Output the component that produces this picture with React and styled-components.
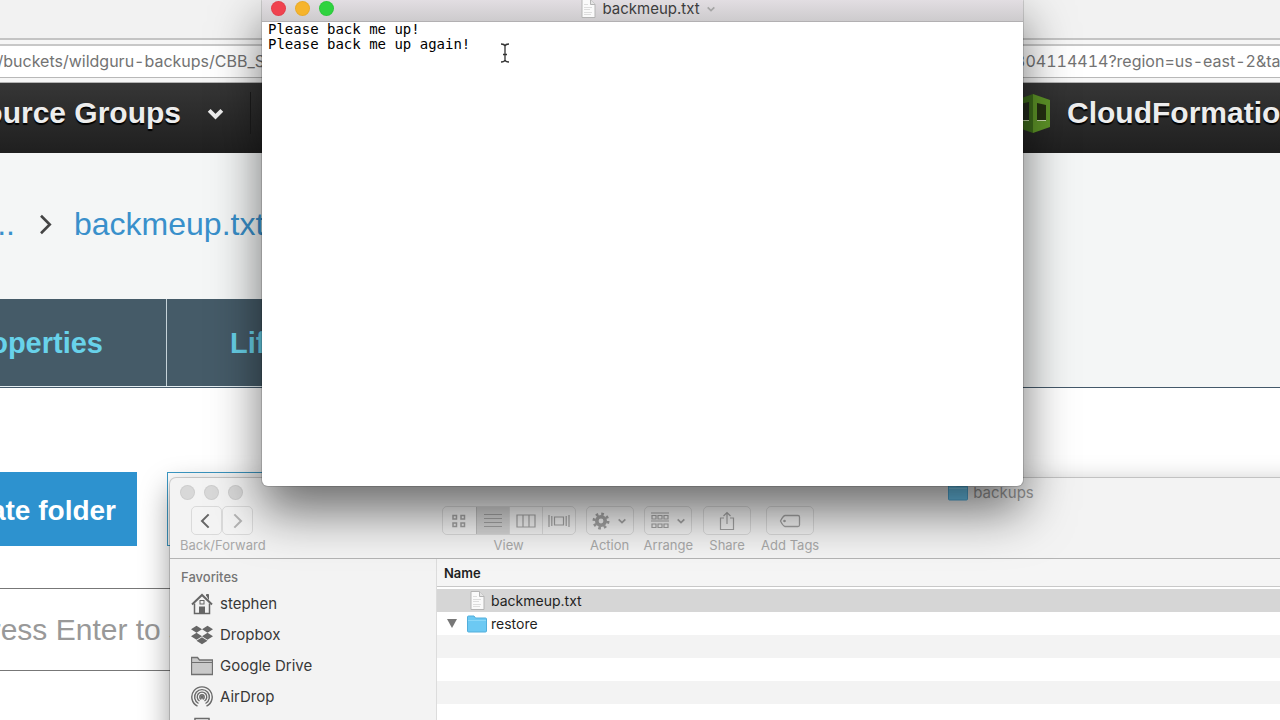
import React from 'react';
import styled, { createGlobalStyle, css } from 'styled-components';
import { FaDropbox } from 'react-icons/fa';

const GlobalStyle = createGlobalStyle`
  * {
    box-sizing: border-box;
  }
  body {
    margin: 0;
    background: #fff;
    font-family: Inter, "Liberation Sans", sans-serif;
  }
  button, input, textarea {
    font: inherit;
    margin: 0;
    padding: 0;
    border: 0;
    outline: 0;
    background: none;
  }
  a {
    text-decoration: none;
  }
`;

const Desktop = styled.div`
  position: relative;
  height: 100vh;
  overflow: hidden;
`;

/* ---------- browser ---------- */

const Browser = styled.div`
  font-family: "Liberation Sans", Arial, sans-serif;
`;

const TabStrip = styled.div`
  height: 40px;
  background: #f2f2f2;
  border-bottom: 2px solid #c4c4c4;
`;

const AddressRow = styled.div`
  padding: 4px 0;
  background: #f6f6f6;
  border-bottom: 1px solid #b4b4b4;
`;

const AddressField = styled.div`
  display: flex;
  align-items: center;
  height: 34px;
  padding-bottom: 2px;
  background: #fff;
  border-top: 2px solid #c8c8c8;
  border-bottom: 1px solid #b8b8b8;
  color: #737373;
  font-family: Inter, sans-serif;
  font-size: 16px;
  font-variant-numeric: tabular-nums;
  white-space: nowrap;
  overflow: hidden;
`;

const UrlPart = styled.span`
  display: flex;
  flex: none;
  justify-content: ${(props) => (props.$end ? 'flex-end' : 'flex-start')};
  ${(props) =>
    props.$end &&
    css`
      width: 265px;
      margin-right: 750px;
    `}
`;

const AwsNav = styled.nav`
  display: flex;
  align-items: center;
  height: 70px;
  padding-bottom: 10px;
  background: linear-gradient(#363636, #1f1f1f);
  overflow: hidden;
`;

const NavItem = styled.a`
  display: flex;
  flex: none;
  align-items: center;
  justify-content: flex-end;
  gap: 16px;
  color: #ededed;
  font-size: 30px;
  font-weight: bold;
  white-space: nowrap;
  text-shadow: 0 2px 1px #000;
`;

const NavLeft = styled.div`
  display: flex;
  flex: none;
  align-items: center;
  justify-content: flex-end;
  width: 251px;
  height: 42px;
  margin-right: 760px;
  padding-right: 25px;
  border-right: 1px solid #1c1c1c;
`;

const NavLeftItem = styled(NavItem)`
  gap: 25px;
`;

const Header = styled.header`
  height: 235px;
  background: #f4f6f6;
  border-bottom: 1px solid #44596a;
`;

const Crumbs = styled.div`
  display: flex;
  align-items: center;
  gap: 19px;
  height: 146px;
  padding-bottom: 4px;
`;

const Crumb = styled.a`
  display: flex;
  flex: none;
  justify-content: flex-end;
  color: #3990cb;
  font-size: 32px;
  ${(props) =>
    props.$cut &&
    css`
      width: 15px;
    `}
`;

const Tabs = styled.div`
  display: flex;
  width: 480px;
  height: 88px;
  border-bottom: 1px solid #e4eef2;
  background: #455b68;
`;

const Tab = styled.button`
  display: flex;
  flex: none;
  align-items: center;
  justify-content: ${(props) => (props.$first ? 'flex-end' : 'flex-start')};
  width: ${(props) => (props.$first ? '167px' : '313px')};
  padding: 2px 63px 0;
  color: #68d2ea;
  font-size: 29px;
  font-weight: bold;
  border-right: 1px solid #c5d3d9;
`;

const Actions = styled.div`
  display: flex;
  gap: 30px;
  padding: 84px 0 42px;
`;

const Action = styled.button`
  display: flex;
  align-items: center;
  justify-content: flex-end;
  width: ${(props) => (props.$outline ? '280px' : '137px')};
  height: 74px;
  padding: 3px 21px 0 0;
  color: #fff;
  background: ${(props) => (props.$outline ? '#fff' : '#2d92cf')};
  border: ${(props) => (props.$outline ? '1px solid #3c9ac6' : '0')};
  font-size: 28px;
  font-weight: bold;
  white-space: nowrap;
`;

const Search = styled.input`
  display: block;
  width: 100%;
  height: 83px;
  border: 1px solid #777;
  border-width: 1px 0;
  font-size: 30px;
  text-indent: -26px;
  &::placeholder {
    color: #999;
    opacity: 1;
  }
`;

/* ---------- windows ---------- */

const Lights = styled.div`
  display: flex;
  gap: 9px;
`;

const Light = styled.button`
  width: 15px;
  height: 15px;
  border-radius: 50%;
  background: ${(props) => props.$color};
  border: 1px solid rgba(0, 0, 0, 0.05);
`;

const Finder = styled.section`
  position: absolute;
  top: 478px;
  left: 170px;
  right: -532px;
  bottom: -80px;
  display: flex;
  flex-direction: column;
  background: #f3f3f3;
  border-radius: 6px 6px 0 0;
  box-shadow: 0 0 0 1px rgba(0, 0, 0, 0.16), 0 10px 30px rgba(0, 0, 0, 0.4);
`;

const FinderTitleBar = styled.div`
  display: grid;
  grid-template-columns: 1fr auto 1fr;
  align-items: center;
  height: 28px;
  padding: 0 10px;
`;

const FinderTitle = styled.div`
  display: flex;
  align-items: center;
  gap: 5px;
  color: #999;
  font-size: 15px;
`;

const Toolbar = styled.div`
  display: flex;
  gap: 10px;
  height: 53px;
  padding: 0 10px;
  border-bottom: 1px solid #b4b4b4;
`;

const Tool = styled.div`
  display: flex;
  flex: none;
  flex-direction: column;
  align-items: center;
  gap: 2px;
  color: #a8a8a8;
  font-size: 13px;
  line-height: 16px;
  ${(props) =>
    props.$nav &&
    css`
      margin-right: 166px;
    `}
`;

const ButtonGroup = styled.div`
  display: flex;
  height: 29px;
  border: 1px solid rgba(0, 0, 0, 0.1);
  border-radius: 5px;
  overflow: hidden;
`;

const NavButtons = styled.div`
  display: flex;
  margin-right: 2px;
`;

const ToolButton = styled.button`
  display: flex;
  align-items: center;
  justify-content: center;
  gap: 7px;
  width: ${(props) => props.$width || 33}px;
  color: ${(props) => props.$color || '#a3a3a3'};
  background: ${(props) => (props.$active ? 'rgba(0, 0, 0, 0.12)' : 'rgba(255, 255, 255, 0.12)')};
  & + & {
    border-left: 1px solid rgba(0, 0, 0, 0.1);
  }
`;

const FinderBody = styled.div`
  display: flex;
  flex: 1;
  min-height: 0;
`;

const Sidebar = styled.aside`
  width: 267px;
  flex: none;
  padding: 9px 11px;
  border-right: 1px solid #dcdcdc;
`;

const SidebarTitle = styled.h2`
  margin: 0 0 2px;
  color: #757575;
  font-size: 13px;
  font-weight: 500;
  line-height: 18px;
`;

const Place = styled.a`
  display: flex;
  align-items: center;
  gap: 7px;
  height: 31px;
  padding-left: 10px;
  color: #383838;
  font-size: 15px;
`;

const Files = styled.table`
  flex: 1;
  align-self: flex-start;
  border-spacing: 0;
  font-size: 14px;
  color: #1f1f1f;
  th {
    height: 28px;
    padding: 0 7px;
    text-align: left;
    font-size: 13px;
    font-weight: 600;
    background: #f5f5f5;
    border-bottom: 1px solid #c8c8c8;
  }
`;

const FileRow = styled.tr`
  height: 23px;
  background: ${(props) => props.$color};
  td {
    padding: 0 10px;
  }
`;

const FileCell = styled.div`
  display: grid;
  grid-template-columns: 10px 20px 1fr;
  align-items: center;
  justify-items: center;
  column-gap: 10px;
  span {
    justify-self: start;
    margin-left: -6px;
  }
`;

const HeaderGap = styled.tr`
  height: 2px;
  background: #fff;
  td {
    padding: 0;
  }
`;

const Editor = styled.section`
  position: absolute;
  top: -4px;
  left: 262px;
  width: 761px;
  height: 490px;
  display: flex;
  flex-direction: column;
  background: #fff;
  border-radius: 6px;
  overflow: hidden;
  box-shadow: 0 0 0 1px rgba(0, 0, 0, 0.14), 0 25px 50px rgba(0, 0, 0, 0.56);
`;

const EditorBar = styled.div`
  display: grid;
  grid-template-columns: 1fr auto 1fr;
  align-items: center;
  height: 26px;
  flex: none;
  padding: 0 9px;
  background: linear-gradient(#e6e1e6, #cdcbcd);
  border-bottom: 1px solid #b2b0b2;
`;

const EditorTitle = styled.div`
  display: flex;
  align-items: center;
  gap: 6px;
  padding-left: 12px;
  color: #3c3c3c;
  font-size: 15px;
`;

const EditorText = styled.textarea`
  flex: 1;
  padding: 0 6px;
  resize: none;
  color: #000;
  font-family: "DejaVu Sans Mono", monospace;
  font-size: 14px;
  line-height: 15px;
`;

const Pointer = styled.svg`
  position: absolute;
  top: 43px;
  left: 500px;
`;

/* ---------- drawings ---------- */

function Chevron({ dir = 'down', size = 10, stroke = 2, color = 'currentColor' }) {
  const paths = {
    down: 'M1 3 L5 7 L9 3',
    left: 'M7 0 L2 5 L7 10',
    right: 'M3 0 L8 5 L3 10',
  };
  return (
    <svg width={size} height={size} viewBox="-1 -1 12 12" fill="none" stroke={color} strokeWidth={stroke}>
      <path d={paths[dir]} />
    </svg>
  );
}

function DocIcon() {
  return (
    <svg width="15" height="19" viewBox="0 0 15 19">
      <path d="M1 .5h8.500l4.500 5v13H1z" fill="#fafafa" stroke="#b4b4b4" />
      <path d="M9.500.5v5H14" fill="#e4e4e4" stroke="#b4b4b4" />
      <path d="M3 5.500h4M3 8.500h8M3 10.500h6M3 13.500h8M3 15.500h7" stroke="#ddd" />
    </svg>
  );
}

function FolderIcon() {
  return (
    <svg width="20" height="18" viewBox="0 0 20 18">
      <path d="M.5 2Q.5 1 1.500 1H7l1.500 2H18.500q1 0 1 1v12q0 1-1 1h-17q-1 0-1-1z" fill="#6cc9f3" stroke="#52aedb" />
      <path d="M1 5.500h18" stroke="#8bd8f8" />
    </svg>
  );
}

function HomeIcon() {
  return (
    <svg width="22" height="22" viewBox="0 0 22 22" fill="none" stroke="#666">
      <path d="M15.500 3v-1.500h2v5" fill="#666" />
      <path d="M1 11.500L11 2l10 9.500" strokeWidth="2" />
      <path d="M3.500 10.500v10h15v-10" strokeWidth="1.500" />
      <rect x="9" y="7.500" width="4" height="3.500" />
      <rect x="8.500" y="14" width="5" height="6.500" fill="#666" />
    </svg>
  );
}

function GrayFolderIcon() {
  return (
    <svg width="22" height="20" viewBox="0 0 22 20" fill="#c9c9c9" stroke="#707070">
      <path d="M.5 18.500v-17h6l2 2.500h13v14.500z" strokeWidth="1.300" />
      <path d="M.5 6.500h21" />
    </svg>
  );
}

function AirDropIcon() {
  return (
    <svg width="22" height="22" viewBox="0 0 22 22" fill="none" stroke="#6a6a6a" strokeWidth="1.400">
      <path d="M6.500 20.200a10.200 10.200 0 1 1 9 0" />
      <path d="M7.500 17.500a7.400 7.400 0 1 1 7 0" />
      <path d="M8.500 15a4.800 4.800 0 1 1 5 0" />
      <circle cx="11" cy="11" r="2.200" />
      <path d="M11 12l-4 8h8z" fill="#f3f3f3" stroke="none" />
      <circle cx="11" cy="11" r="1" fill="#6a6a6a" />
    </svg>
  );
}

function DeviceIcon() {
  return (
    <svg width="22" height="22" viewBox="0 0 22 22" fill="none" stroke="#6a6a6a" strokeWidth="1.500">
      <path d="M4 1.500h14l1 19H3z" />
      <path d="M5.500 5h11" />
    </svg>
  );
}

function GridIcon() {
  return (
    <svg width="14" height="14" viewBox="0 0 14 14" fill="none" stroke="currentColor" strokeWidth="1.500">
      <path d="M1 1.500h3.500v3.500H1zM9 1.500h3.500v3.500H9zM1 9h3.500v3.500H1zM9 9h3.500v3.500H9z" />
    </svg>
  );
}

function ListIcon() {
  return (
    <svg width="18" height="14" viewBox="0 0 18 14" stroke="currentColor">
      <path d="M0 .5h18M0 4.500h18M0 8.500h18M0 12.500h18" />
    </svg>
  );
}

function ColumnsIcon() {
  return (
    <svg width="20" height="14" viewBox="0 0 20 14" fill="none" stroke="currentColor" strokeWidth="1.200">
      <path d="M1 1h18v12H1zM7 1v12M13 1v12" />
    </svg>
  );
}

function CoverIcon() {
  return (
    <svg width="22" height="14" viewBox="0 0 22 14" fill="none" stroke="currentColor" strokeWidth="1.200">
      <path d="M6.500 3h9v8h-9zM1 1v12M3.800 2v10M18.200 2v10M21 1v12" />
    </svg>
  );
}

function GearIcon() {
  return (
    <svg width="18" height="18" viewBox="0 0 18 18" fill="none" stroke="currentColor">
      <circle cx="9" cy="9" r="4.200" strokeWidth="3.600" />
      <circle cx="9" cy="9" r="7" strokeWidth="3" strokeDasharray="2.600 2.898" />
    </svg>
  );
}

function ArrangeIcon() {
  return (
    <svg width="18" height="17" viewBox="0 0 18 17" fill="none" stroke="currentColor" strokeWidth="1.200">
      <path d="M0 1h18M0 9h18" />
      <path d="M1 3.500h4v3.500H1zM7 3.500h4v3.500H7zM13 3.500h4v3.500H13zM1 12h4v3.500H1zM7 12h4v3.500H7zM13 12h4v3.500H13z" />
    </svg>
  );
}

function ShareIcon() {
  return (
    <svg width="16" height="20" viewBox="0 0 16 20" fill="none" stroke="currentColor" strokeWidth="1.200">
      <path d="M5 7H1.500v11.500h13V7H11M8 13V1.500M4.500 5L8 1.500 11.500 5" />
    </svg>
  );
}

function TagIcon() {
  return (
    <svg width="22" height="14" viewBox="0 0 22 14" fill="none" stroke="currentColor" strokeWidth="1.300">
      <path d="M6 1.500h13q1.500 0 1.500 1.500v8q0 1.500-1.500 1.500H6Q4 12 1.500 7 4 2 6 1.500z" />
      <circle cx="5.500" cy="7" r=".7" />
    </svg>
  );
}

function StackLogo() {
  return (
    <svg width="40" height="40" viewBox="0 0 40 40">
      <path d="M22 1L5 7v27l17 6z" fill="#3d6b1b" />
      <path d="M9 11l9-2v18l-9 1z" fill="#232b1c" />
      <path d="M9 27h9v1H9z" fill="#b9cf9f" />
      <path d="M22 1l17 6v27l-17 6z" fill="#5f9628" />
      <path d="M26 10l9 2v15h-9z" fill="#253012" />
      <path d="M26 27h9v1h-9z" fill="#cbdcae" />
    </svg>
  );
}

const places = [
  { name: 'stephen', icon: <HomeIcon /> },
  { name: 'Dropbox', icon: <FaDropbox size={22} color="#666" /> },
  { name: 'Google Drive', icon: <GrayFolderIcon /> },
  { name: 'AirDrop', icon: <AirDropIcon /> },
  { name: '', icon: <DeviceIcon /> },
];

function BrowserPage() {
  return (
    <Browser>
      <TabStrip />
      <AddressRow>
        <AddressField>
          <UrlPart $end>/buckets/wildguru-backups/CBB_S</UrlPart>
          <UrlPart>304114414?region=us-east-2&amp;ta</UrlPart>
        </AddressField>
      </AddressRow>
      <AwsNav>
        <NavLeft>
          <NavLeftItem href="#groups">
            Resource Groups
            <Chevron size={19} stroke={2.5} />
          </NavLeftItem>
        </NavLeft>
        <NavItem href="#cloudformation">
          <StackLogo />
          CloudFormation
        </NavItem>
      </AwsNav>
      <Header>
        <Crumbs>
          <Crumb href="#bucket" $cut>...</Crumb>
          <Chevron dir="right" size={21} stroke={1.5} color="#444" />
          <Crumb href="#file">backmeup.txt</Crumb>
        </Crumbs>
        <Tabs>
          <Tab $first>Properties</Tab>
          <Tab>Lifecycle</Tab>
        </Tabs>
      </Header>
      <Actions>
        <Action>Create folder</Action>
        <Action $outline aria-label="More" />
      </Actions>
      <Search aria-label="Search" placeholder="press Enter to search" />
    </Browser>
  );
}

function FinderWindow() {
  return (
    <Finder>
      <FinderTitleBar>
        <Lights>
          <Light $color="#d8d8d8" aria-label="Close" />
          <Light $color="#d8d8d8" aria-label="Minimize" />
          <Light $color="#d8d8d8" aria-label="Zoom" />
        </Lights>
        <FinderTitle>
          <FolderIcon />
          backups
        </FinderTitle>
      </FinderTitleBar>
      <Toolbar>
        <Tool $nav>
          <NavButtons>
            <ButtonGroup>
              <ToolButton $width={29} $color="#666" aria-label="Back">
                <Chevron dir="left" size={16} stroke={1.5} />
              </ToolButton>
            </ButtonGroup>
            <ButtonGroup>
              <ToolButton $width={29} $color="#b4b4b4" aria-label="Forward">
                <Chevron dir="right" size={16} stroke={1.5} />
              </ToolButton>
            </ButtonGroup>
          </NavButtons>
          Back/Forward
        </Tool>
        <Tool>
          <ButtonGroup>
            <ToolButton aria-label="Icons"><GridIcon /></ToolButton>
            <ToolButton $active aria-label="List"><ListIcon /></ToolButton>
            <ToolButton aria-label="Columns"><ColumnsIcon /></ToolButton>
            <ToolButton aria-label="Cover Flow"><CoverIcon /></ToolButton>
          </ButtonGroup>
          View
        </Tool>
        <Tool>
          <ButtonGroup>
            <ToolButton $width={46} aria-label="Action">
              <GearIcon />
              <Chevron stroke={2} />
            </ToolButton>
          </ButtonGroup>
          Action
        </Tool>
        <Tool>
          <ButtonGroup>
            <ToolButton $width={46} aria-label="Arrange">
              <ArrangeIcon />
              <Chevron stroke={2} />
            </ToolButton>
          </ButtonGroup>
          Arrange
        </Tool>
        <Tool>
          <ButtonGroup>
            <ToolButton $width={46} aria-label="Share"><ShareIcon /></ToolButton>
          </ButtonGroup>
          Share
        </Tool>
        <Tool>
          <ButtonGroup>
            <ToolButton $width={46} aria-label="Add Tags"><TagIcon /></ToolButton>
          </ButtonGroup>
          Add Tags
        </Tool>
      </Toolbar>
      <FinderBody>
        <Sidebar>
          <SidebarTitle>Favorites</SidebarTitle>
          {places.map((place, i) => (
            <Place key={i} href="#place">
              {place.icon}
              {place.name}
            </Place>
          ))}
        </Sidebar>
        <Files>
          <thead>
            <tr>
              <th>Name</th>
            </tr>
          </thead>
          <tbody>
            <HeaderGap><td /></HeaderGap>
            <FileRow $color="#d6d6d6">
              <td>
                <FileCell>
                  <i />
                  <DocIcon />
                  <span>backmeup.txt</span>
                </FileCell>
              </td>
            </FileRow>
            <FileRow $color="#fff">
              <td>
                <FileCell>
                  <svg width="10" height="9" viewBox="0 0 10 9">
                    <path d="M0 0h10L5 9z" fill="#777" />
                  </svg>
                  <FolderIcon />
                  <span>restore</span>
                </FileCell>
              </td>
            </FileRow>
            <FileRow $color="#f3f3f3"><td /></FileRow>
            <FileRow $color="#fff"><td /></FileRow>
            <FileRow $color="#f3f3f3"><td /></FileRow>
            <FileRow $color="#fff"><td /></FileRow>
          </tbody>
        </Files>
      </FinderBody>
    </Finder>
  );
}

function EditorWindow() {
  return (
    <Editor>
      <EditorBar>
        <Lights>
          <Light $color="#f0424f" aria-label="Close" />
          <Light $color="#f6b42c" aria-label="Minimize" />
          <Light $color="#2fd33f" aria-label="Zoom" />
        </Lights>
        <EditorTitle>
          <DocIcon />
          backmeup.txt
          <Chevron stroke={2} color="#a5a5a5" />
        </EditorTitle>
      </EditorBar>
      <EditorText
        aria-label="Document"
        spellCheck={false}
        defaultValue={'Please back me up!\nPlease back me up again!'}
      />
    </Editor>
  );
}

export default function App() {
  return (
    <>
      <GlobalStyle />
      <Desktop>
        <BrowserPage />
        <FinderWindow />
        <EditorWindow />
        <Pointer width="10" height="20" viewBox="0 0 10 20" fill="none" stroke="#333" strokeWidth="1.300">
          <path d="M1 1q3.500 0 4 2 .500-2 4-2M5 3v14M1 19q3.500 0 4-2 .500 2 4 2M3 11.500h4" />
        </Pointer>
      </Desktop>
    </>
  );
}
